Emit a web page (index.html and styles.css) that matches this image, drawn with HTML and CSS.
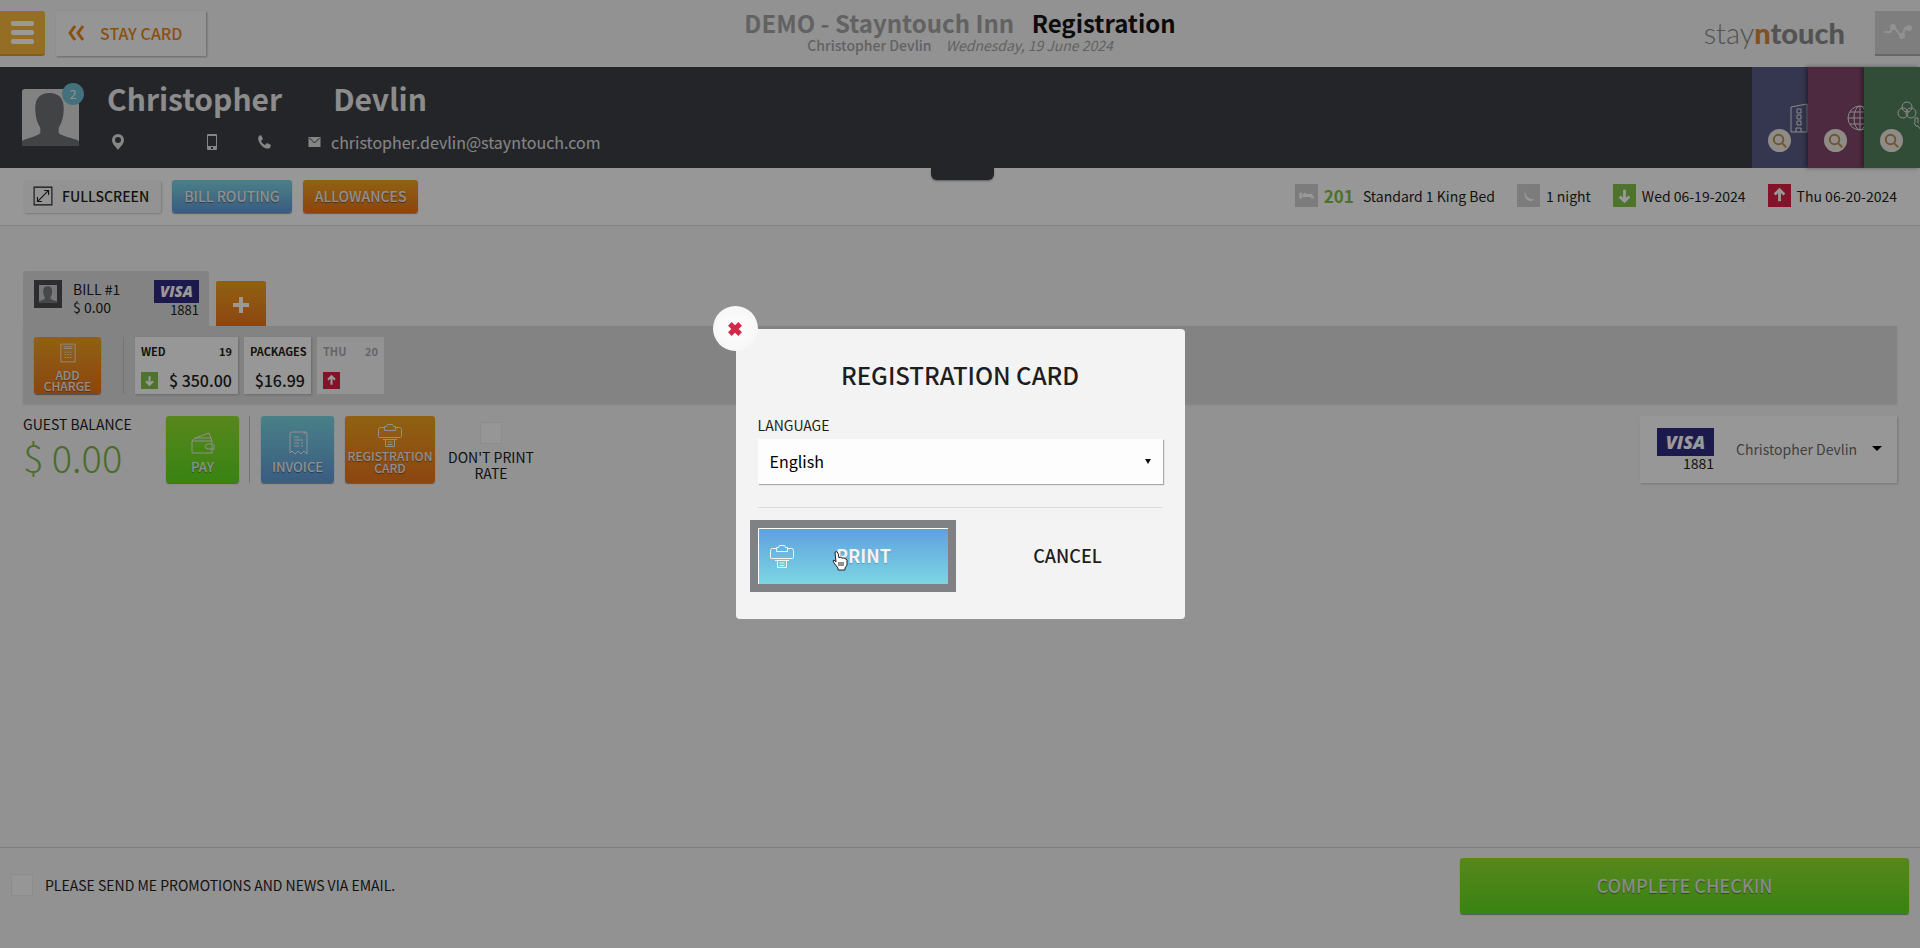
FILE: index.html
```html
<!DOCTYPE html>
<html lang="en">
<head>
    <meta charset="UTF-8">
    <meta name="viewport" content="width=device-width, initial-scale=1.0">
    <title>Registration</title>
    <link rel="stylesheet" href="styles.css">
</head>
<body>
    <!-- Shared icons -->
    <svg class="sprite" aria-hidden="true">
        <symbol id="printer" viewBox="0 0 24 24">
            <path d="M6.500 3.500H2.500a2 2 0 0 0-2 2v7a1 1 0 0 0 1 1h21a1 1 0 0 0 1-1v-7a2 2 0 0 0-2-2h-4M6.500 6.500v-4h2l1-2h5l1 2h2v4zM5 15.500h14M7.500 15.500v7h9v-7M9.500 18h5M9.500 20.500h5"/>
        </symbol>
        <symbol id="arrow" viewBox="0 0 24 24">
            <path d="M12 6v12M7 13l5 5 5-5"/>
        </symbol>
        <symbol id="search" viewBox="0 0 24 24">
            <circle cx="11" cy="11" r="5"/>
            <path d="M15 15l4 4"/>
        </symbol>
        <symbol id="person" viewBox="0 0 56 56">
            <path d="M27 4c9 0 14 5 14 15 0 8-2 15-5 19v5c3 4 15 5 20 8v5H0v-5c5-3 15-4 18-8v-5c-3-4-5-11-5-19C13 9 18 4 27 4z"/>
        </symbol>
    </svg>

    <header class="header">
        <button type="button" class="menu-btn" aria-label="Menu"><span></span><span></span><span></span></button>
        <button type="button" class="back-btn">
            <svg viewBox="0 0 18 18"><path d="M8 2L3 9l5 7M16 2l-5 7 5 7"/></svg>
            STAY CARD
        </button>
        <div class="heading">
            <h1><span>DEMO - Stayntouch Inn</span> Registration</h1>
            <p><strong>Christopher Devlin</strong> <em>Wednesday, 19 June 2024</em></p>
        </div>
        <div class="logo"><span class="thin">stay</span><span class="orange">n</span>touch</div>
        <button type="button" class="activity-btn" aria-label="Activity">
            <svg viewBox="0 0 32 24"><path d="M2 13h6l3-6 9 11 3-9 6 1"/><circle cx="11" cy="8" r="2"/><circle cx="20" cy="17" r="2"/><circle cx="27" cy="9" r="2"/></svg>
        </button>
    </header>

    <section class="guest">
        <div class="avatar">
            <svg><use href="#person"/></svg>
            <span class="badge">2</span>
        </div>
        <div class="guest-info">
            <h2><span>Christopher</span><span>Devlin</span></h2>
            <div class="contact">
                <svg class="pin" viewBox="0 0 14 18"><path fill-rule="evenodd" d="M7 1a6 6 0 0 1 6 6c0 4-4 7-6 10C5 14 1 11 1 7a6 6 0 0 1 6-6zm0 3a3 3 0 1 0 0 6 3 3 0 0 0 0-6z"/></svg>
                <svg class="mobile" viewBox="0 0 10 18"><path fill-rule="evenodd" d="M1 1h8q1 0 1 1v14q0 1-1 1H1q-1 0-1-1V2q0-1 1-1zm0 2v10h8V3zm3 11v2h2v-2z"/></svg>
                <svg class="phone" viewBox="0 0 14 14"><path d="M2 1l2-1 2 4-2 2c1 2 2 3 4 4l2-2 4 2-1 3c-2 1-5 1-8-2S0 3 2 1z"/></svg>
                <svg class="mail" viewBox="0 0 12 12"><path d="M0 1h12v10H0z"/><path class="fold" d="M1 2l5 5 5-5"/></svg>
                <span>christopher.devlin@stayntouch.com</span>
            </div>
        </div>
        <div class="side-cards">
            <a href="#" class="side-card blue" aria-label="Company">
                <svg class="picto" viewBox="0 0 30 30"><path d="M1 4l16-3v28H1zM7 6h4v4H7zM7 12h4v4H7zM7 18h4v4H7zM6 29v-4h5v4"/></svg>
                <span class="lens"><svg><use href="#search"/></svg></span>
            </a>
            <a href="#" class="side-card pink" aria-label="Travel agent">
                <svg class="picto" viewBox="0 0 30 30"><circle cx="14" cy="15" r="12"/><ellipse cx="14" cy="15" rx="6" ry="12"/><path d="M2 15h24M14 3v24M4 9h20M4 21h20"/></svg>
                <span class="lens"><svg><use href="#search"/></svg></span>
            </a>
            <a href="#" class="side-card green" aria-label="Group">
                <svg class="picto" viewBox="0 0 30 30"><circle cx="10" cy="6" r="5"/><circle cx="6" cy="12" r="5"/><circle cx="14" cy="12" r="5"/><path d="M18 22v-5h3v5M17 22l2 3h2l3 4"/></svg>
                <span class="lens"><svg><use href="#search"/></svg></span>
            </a>
        </div>
        <div class="handle"></div>
    </section>

    <section class="toolbar">
        <button type="button" class="btn plain">
            <svg viewBox="0 0 18 18"><path d="M1 1h16v16H1zM4 14L14 4M10 4h4v4M4 10v4h4"/></svg>
            FULLSCREEN
        </button>
        <button type="button" class="btn blue">BILL ROUTING</button>
        <button type="button" class="btn orange">ALLOWANCES</button>
        <ul class="stay">
            <li>
                <span class="tag"><svg viewBox="0 0 24 24"><path d="M6 9v6M8 12h10M9 10l3 2M18 12v3"/></svg></span>
                <b>201</b> Standard 1 King Bed
            </li>
            <li>
                <span class="tag"><svg viewBox="0 0 24 24"><path class="solid" d="M9 6c-1 6 2 10 9 10-5 5-13-2-9-10z"/></svg></span>
                1 night
            </li>
            <li><span class="tag in"><svg><use href="#arrow"/></svg></span> Wed 06-19-2024</li>
            <li><span class="tag out"><svg><use href="#arrow"/></svg></span> Thu 06-20-2024</li>
        </ul>
    </section>

    <main class="bills">
        <div class="tabs">
            <button type="button" class="tab">
                <span class="thumb"><svg><use href="#person"/></svg></span>
                <span class="tab-name">BILL #1<br>$ 0.00</span>
                <span class="card-no"><span class="visa">VISA</span>1881</span>
            </button>
            <button type="button" class="add-btn" aria-label="Add bill"><svg viewBox="0 0 16 16"><path d="M8 0v16M0 8h16"/></svg></button>
        </div>

        <div class="days">
            <button type="button" class="btn orange charge">
                <svg viewBox="0 0 18 22"><path d="M1 1h16v20H1zM4 4h10M4 6h10M5 10h2M8 10h2M11 10h2M5 13h2M8 13h2M11 13h2M5 16h2M8 16h2M11 16h2"/></svg>
                ADD<br>CHARGE
            </button>
            <span class="line"></span>
            <div class="day wide">
                <div><span>WED</span><span>19</span></div>
                <div class="amount"><span class="tag in small"><svg><use href="#arrow"/></svg></span><span>$ 350.00</span></div>
            </div>
            <div class="day">
                <div><span>PACKAGES</span></div>
                <div class="amount only"><span>$16.99</span></div>
            </div>
            <div class="day faded">
                <div><span>THU</span><span>20</span></div>
                <div class="amount"><span class="tag out small"><svg><use href="#arrow"/></svg></span></div>
            </div>
        </div>

        <div class="summary">
            <div class="balance">
                GUEST BALANCE
                <span>$ 0.00</span>
            </div>
            <button type="button" class="btn lime action">
                <svg viewBox="0 0 24 24"><path d="M2 10h19v12H2a1 1 0 0 1-1-1V10l3-3 14-5 3 8M4 7l16 0M21 13h-4a2 2 0 0 0 0 5h4M23 13v5h-2"/></svg>
                PAY
            </button>
            <span class="line"></span>
            <button type="button" class="btn blue action">
                <svg viewBox="0 0 24 24"><path d="M4 22V3q0-2 2-2h14q-2 0-2 2v0M18 5v0M20 1q1 0 1 2v20l-3-3-3 3-3-3-3 3-3-3-2 2M8 6h5M8 9h9M8 12h5M15 12h2M8 15h5M15 15h2"/></svg>
                INVOICE
            </button>
            <button type="button" class="btn orange action wide">
                <svg><use href="#printer"/></svg>
                REGISTRATION<br>CARD
            </button>
            <label class="no-rate">
                <input type="checkbox" class="check">
                DON'T PRINT<br>RATE
            </label>
            <button type="button" class="payer">
                <span class="card-no large"><span class="visa">VISA</span>1881</span>
                <span>Christopher Devlin</span>
                <span class="caret"></span>
            </button>
        </div>
    </main>

    <footer class="footer">
        <label class="promo">
            <input type="checkbox" class="check">
            PLEASE SEND ME PROMOTIONS AND NEWS VIA EMAIL.
        </label>
        <button type="button" class="btn lime complete">COMPLETE CHECKIN</button>
    </footer>

    <div class="overlay">
        <form class="modal" role="dialog" aria-labelledby="modalTitle">
            <button type="button" class="close" aria-label="Close"><svg viewBox="0 0 14 14"><path d="M3 3l8 8M11 3l-8 8"/></svg></button>
            <h3 id="modalTitle">REGISTRATION CARD</h3>
            <label for="language">LANGUAGE</label>
            <div class="select-box">
                <select id="language" name="language">
                    <option>English</option>
                </select>
            </div>
            <hr>
            <div class="modal-actions">
                <button type="button" class="print">
                    <svg class="print-icon"><use href="#printer"/></svg>
                    PRINT
                    <svg class="pointer" viewBox="0 0 16 20"><path d="M3 1q2-1 3 1l1 5 1-1 2 1 2 0 2 1 1 1v5l-2 3v2H6v-2l-4-5q-2-3 0-3l2 2z"/><path d="M7 11v4M9 11v4M11 11v4"/></svg>
                </button>
                <button type="button" class="cancel">CANCEL</button>
            </div>
        </form>
    </div>
</body>
</html>
```

FILE: styles.css
```css
* {
    box-sizing: border-box;
}

body {
    margin: 0;
    min-height: 100vh;
    display: flex;
    flex-direction: column;
    font-family: 'Noto Sans CJK JP', 'Noto Sans', sans-serif;
    font-size: 14px;
    line-height: 18px;
    color: #1e1e20;
    background: #f3f3f3;
}

button, select {
    font: inherit;
    color: inherit;
    border: none;
    padding: 0;
    cursor: pointer;
}

svg {
    fill: none;
    stroke: currentColor;
    flex: none;
}

.sprite {
    position: absolute;
    width: 0;
    height: 0;
}

/* Header */
.header {
    position: relative;
    display: flex;
    align-items: center;
    height: 67px;
}

.menu-btn {
    display: flex;
    flex-direction: column;
    align-items: flex-end;
    justify-content: center;
    gap: 4px;
    width: 45px;
    height: 45px;
    padding-right: 11px;
    background: #f9b83e;
    border-bottom: 2px solid #d79b2e;
    border-radius: 0 3px 3px 0;
}

.menu-btn span {
    width: 23px;
    height: 5px;
    border-radius: 2px;
    background: #fff;
}

.back-btn {
    display: flex;
    align-items: center;
    gap: 14px;
    height: 45px;
    margin-left: 11px;
    padding: 0 23px 2px 10px;
    font-size: 16px;
    font-weight: 500;
    color: #e8851c;
    background: #f9f9f9;
    box-shadow: 1px 1px 2px rgba(0, 0, 0, 0.3);
}

.back-btn svg {
    width: 20px;
    height: 18px;
    stroke-width: 3;
}

.heading {
    position: absolute;
    left: 50%;
    top: 9px;
    transform: translateX(-50%);
    text-align: center;
    white-space: nowrap;
}

.heading h1 {
    margin: 0;
    font-size: 24px;
    line-height: 28px;
    color: #141416;
}

.heading h1 span {
    margin-right: 12px;
    color: #a3a3a3;
}

.heading p {
    margin: 0;
    font-size: 14px;
    line-height: 16px;
    color: #a3a3a3;
}

.heading strong {
    font-weight: 500;
    margin-right: 11px;
}

.heading em {
    font-weight: 400;
}

.logo {
    margin-left: auto;
    padding-bottom: 2px;
    font-family: Lato, sans-serif;
    font-size: 29px;
    font-weight: 900;
    line-height: 34px;
    color: #8a8a8a;
}

.logo .thin {
    font-weight: 300;
}

.logo .orange {
    color: #dc8434;
}

.activity-btn {
    width: 45px;
    height: 45px;
    margin-left: 30px;
    color: #f3f3f3;
    background: #d2d2d2;
    border-bottom: 2px solid #aaa;
}

.activity-btn svg {
    width: 32px;
    height: 24px;
    stroke-width: 2;
}

.activity-btn circle {
    fill: currentColor;
}

/* Guest */
.guest {
    position: relative;
    display: flex;
    height: 101px;
    padding-left: 22px;
    color: #f3f3f3;
    background: #3c3e44;
}

.avatar {
    position: relative;
    width: 57px;
    height: 57px;
    margin-top: 22px;
    background: #d9d9d9;
    border-radius: 3px;
}

.avatar svg {
    width: 57px;
    height: 57px;
    fill: #6f7073;
    stroke: none;
}

.badge {
    position: absolute;
    right: -5px;
    top: -6px;
    width: 22px;
    height: 22px;
    border-radius: 50%;
    font-size: 12px;
    line-height: 22px;
    text-align: center;
    background: #6fbdd0;
}

.guest-info {
    margin: 13px 0 0 28px;
}

.guest-info h2 {
    display: flex;
    gap: 51px;
    margin: 0;
    font-size: 30px;
    line-height: 36px;
    color: #e9e9ea;
}

.contact {
    display: flex;
    align-items: center;
    height: 24px;
    margin-top: 14px;
    padding-left: 4px;
    font-size: 16px;
    color: #e0e0e0;
}

.contact svg {
    fill: currentColor;
    stroke: none;
}

.pin {
    width: 14px;
    height: 18px;
    margin-right: 82px;
}

.mobile {
    width: 10px;
    height: 18px;
    margin-right: 40px;
}

.phone {
    width: 14px;
    height: 14px;
    margin-right: 37px;
}

.mail {
    width: 13px;
    height: 12px;
    margin-right: 10px;
}

.contact .fold {
    fill: none;
    stroke: #3c3e44;
}

.side-cards {
    display: flex;
    margin-left: auto;
}

.side-card {
    position: relative;
    width: 56px;
    overflow: hidden;
    color: #e6e6e6;
}

.side-card + .side-card {
    box-shadow: -2px 0 4px rgba(0, 0, 0, 0.4);
}

.side-card.blue {
    background: #595a84;
}

.side-card.pink {
    background: #80476a;
}

.side-card.green {
    background: #53805c;
}

.picto {
    position: absolute;
    left: 38px;
    top: 36px;
    width: 30px;
    height: 30px;
    stroke-width: 1;
}

.side-card.green .picto {
    left: 33px;
    top: 34px;
}

.lens {
    position: absolute;
    left: 16px;
    top: 62px;
    width: 23px;
    height: 23px;
    border-radius: 50%;
    color: #b98f52;
    background: #efe9e2;
}

.lens svg {
    width: 23px;
    height: 23px;
    stroke-width: 2;
}

.handle {
    position: absolute;
    left: 50%;
    top: 100%;
    width: 63px;
    height: 12px;
    margin-left: -29px;
    background: #3c3e44;
    border-radius: 0 0 6px 6px;
    box-shadow: 0 1px 2px rgba(0, 0, 0, 0.4);
}

/* Buttons */
.btn {
    height: 33px;
    padding: 0 12px 2px;
    font-size: 14px;
    font-weight: 500;
    color: #f0f0f0;
    border-radius: 3px;
    text-shadow: 0 1px 1px rgba(0, 0, 0, 0.4);
    box-shadow: 0 1px 1px rgba(0, 0, 0, 0.4);
}

.btn.blue {
    background: linear-gradient(#7bd6e2, #6199d8);
}

.btn.orange {
    background: linear-gradient(#f0a21e, #ea741c);
}

.btn.lime {
    background: linear-gradient(#92e030, #5edc1e);
}

.btn.plain {
    display: flex;
    align-items: center;
    gap: 9px;
    padding: 0 12px 2px 10px;
    color: #1e1e20;
    background: #f6f6f6;
    text-shadow: none;
    box-shadow: 1px 1px 2px rgba(0, 0, 0, 0.2);
}

.btn.plain svg {
    width: 20px;
    height: 20px;
}

/* Toolbar */
.toolbar {
    display: flex;
    align-items: center;
    gap: 11px;
    height: 58px;
    padding: 0 23px;
    background: #fcfcfc;
    border-bottom: 1px solid #dcdcdc;
}

.stay {
    display: flex;
    gap: 22px;
    margin: 0 0 0 auto;
    padding: 0 0 2px;
    list-style: none;
}

.stay li {
    display: flex;
    align-items: center;
    gap: 6px;
}

.stay b {
    margin-right: 3px;
    font-size: 17px;
    color: #80bf45;
}

.tag {
    width: 23px;
    height: 23px;
    color: #fff;
    background: #cfcfcf;
}

.tag svg {
    display: block;
    width: 100%;
    height: 100%;
    stroke-width: 3;
}

.tag .solid {
    fill: currentColor;
    stroke: none;
}

.tag.in {
    background: #80c04a;
}

.tag.out {
    background: #dc1f45;
}

.tag.out svg {
    transform: rotate(180deg);
}

.tag.small {
    width: 17px;
    height: 17px;
}

/* Bills */
.bills {
    flex: 1;
    padding: 45px 23px 0;
}

.tabs {
    display: flex;
    align-items: flex-end;
    gap: 7px;
}

.tab {
    display: flex;
    width: 186px;
    height: 55px;
    padding: 9px 10px 0 11px;
    text-align: left;
    background: #dadada;
    border-radius: 3px 3px 0 0;
}

.thumb {
    width: 28px;
    height: 28px;
    padding: 5px;
    background: #4b4c50;
}

.thumb svg {
    display: block;
    width: 18px;
    height: 18px;
    fill: #77787a;
    stroke: none;
    background: #c9c9c9;
}

.tab-name {
    margin-left: 11px;
}

.card-no {
    display: flex;
    flex-direction: column;
    align-items: flex-end;
    margin-left: auto;
    font-size: 13px;
    line-height: 14px;
}

.visa {
    width: 45px;
    height: 23px;
    font-family: 'Open Sans', sans-serif;
    font-size: 15px;
    font-weight: 800;
    font-style: italic;
    line-height: 23px;
    text-align: center;
    color: #fff;
    background: #2f2a80;
}

.add-btn {
    width: 50px;
    height: 45px;
    padding-top: 6px;
    color: #fff;
    background: linear-gradient(#f0a21e, #ea741c);
    border-radius: 2px 2px 0 0;
}

.add-btn svg {
    width: 16px;
    height: 16px;
    stroke-width: 4;
}

.days {
    display: flex;
    gap: 6px;
    height: 78px;
    padding: 11px 11px 10px;
    background: #dadada;
    box-shadow: 0 1px 2px rgba(0, 0, 0, 0.1);
}

.btn.charge {
    display: flex;
    flex-direction: column;
    align-items: center;
    width: 67px;
    height: 57px;
    padding: 5px 0 0;
    font-size: 12px;
    line-height: 11px;
}

.charge svg {
    width: 16px;
    height: 22px;
    margin-bottom: 5px;
}

.line {
    width: 1px;
    background: #c4c4c4;
}

.days .line {
    margin: 0 5px 0 16px;
}

.day {
    display: flex;
    flex-direction: column;
    justify-content: space-between;
    width: 67px;
    padding: 5px 6px;
    font-size: 11px;
    font-weight: 700;
    background: #fcfcfc;
    box-shadow: 1px 1px 2px rgba(0, 0, 0, 0.2);
}

.day.wide {
    width: 103px;
}

.day div {
    display: flex;
    align-items: center;
    justify-content: space-between;
}

.day .amount {
    font-size: 16px;
    font-weight: 500;
}

.day .amount.only {
    justify-content: flex-end;
}

.day.faded {
    color: #a9a9a9;
    background: #f6f6f6;
    box-shadow: none;
}

/* Balance and actions */
.summary {
    display: flex;
    gap: 11px;
    height: 79px;
    padding-top: 12px;
}

.summary .line {
    margin-left: -1px;
}

.balance {
    width: 132px;
    line-height: 16px;
}

.balance span {
    display: block;
    margin-top: 3px;
    font-size: 38px;
    font-weight: 300;
    line-height: 44px;
    color: #7db44a;
}

.btn.action {
    display: flex;
    flex-direction: column;
    align-items: center;
    width: 73px;
    height: 67px;
    padding: 15px 0 0;
    font-size: 13px;
    line-height: 20px;
}

.action svg {
    width: 24px;
    height: 24px;
    margin-bottom: 2px;
}

.btn.action.wide {
    width: 90px;
    padding-top: 8px;
    font-size: 12px;
    line-height: 12px;
}

.no-rate {
    display: flex;
    flex-direction: column;
    align-items: center;
    padding: 6px 2px 0;
    line-height: 16px;
    text-align: center;
}

.check {
    appearance: none;
    width: 22px;
    height: 22px;
    margin: 0;
    border: 1px solid #eaeaea;
    background: #fafafa;
}

.no-rate .check {
    margin-bottom: 5px;
}

.payer {
    display: flex;
    align-items: center;
    width: 257px;
    margin-left: auto;
    padding: 0 15px 2px 17px;
    color: #6d6d6d;
    background: #fcfcfc;
    box-shadow: 1px 1px 2px rgba(0, 0, 0, 0.2);
}

.card-no.large {
    margin: 0 22px 0 0;
    font-size: 14px;
    line-height: 14px;
    color: #1e1e20;
}

.large .visa {
    width: 57px;
    height: 28px;
    font-size: 18px;
    line-height: 28px;
}

.caret {
    margin-left: auto;
    border: 5px solid transparent;
    border-top-color: #000;
    border-bottom: none;
}

/* Footer */
.footer {
    display: flex;
    justify-content: space-between;
    height: 101px;
    padding: 10px 11px;
    border-top: 1px solid #d2d2d2;
}

.promo {
    display: flex;
    align-items: center;
    gap: 12px;
    height: 54px;
}

.btn.complete {
    width: 449px;
    height: 56px;
    font-size: 18px;
    color: #e6e6e6;
}

/* Modal */
.overlay {
    position: fixed;
    inset: 0;
    display: flex;
    align-items: center;
    justify-content: center;
    background: rgba(0, 0, 0, 0.4);
}

.modal {
    position: relative;
    width: 449px;
    padding: 30px 22px 27px;
    background: #f3f3f3;
    border-radius: 4px;
}

.close {
    position: absolute;
    left: -23px;
    top: -23px;
    width: 45px;
    height: 45px;
    border-radius: 50%;
    color: #d02a48;
    background: radial-gradient(#fff, #f3f3f3);
}

.close svg {
    display: block;
    width: 18px;
    height: 18px;
    margin: auto;
    stroke-width: 4;
}

.modal h3 {
    margin: 0 0 25px;
    font-size: 24px;
    font-weight: 500;
    line-height: 32px;
    text-align: center;
}

.modal label {
    display: block;
    margin-bottom: 5px;
}

.select-box {
    position: relative;
}

.select-box::after {
    content: '';
    position: absolute;
    right: 12px;
    top: 20px;
    border: 3px solid transparent;
    border-top: 5px solid #111;
    border-bottom: none;
}

.select-box select {
    display: block;
    appearance: none;
    width: 100%;
    height: 45px;
    padding: 0 12px 2px;
    font-size: 16px;
    line-height: 26px;
    color: #000;
    background: #fdfdfd;
    box-shadow: 1px 1px 1px rgba(0, 0, 0, 0.3);
}

.modal hr {
    margin: 23px 0 12px;
    border: none;
    border-top: 1px solid #dadada;
}

.modal-actions {
    display: flex;
    justify-content: space-between;
    margin: 0 0 0 -8px;
    font-size: 18px;
    font-weight: 500;
}

.print {
    position: relative;
    width: 206px;
    height: 72px;
    padding: 0 0 2px 22px;
    font-weight: 700;
    color: #f3f3f3;
    background: linear-gradient(#5f9fe0, #7bd6e2) padding-box;
    border: 8px solid #808184;
    box-shadow: inset 1px 1px 0 #fff;
    text-shadow: 0 1px 1px rgba(0, 0, 0, 0.2);
}

.print-icon {
    position: absolute;
    left: 12px;
    top: 17px;
    width: 24px;
    height: 24px;
}

.pointer {
    position: absolute;
    left: 74px;
    top: 23px;
    width: 16px;
    height: 20px;
    color: #222;
    fill: #fff;
}

.cancel {
    width: 190px;
    height: 72px;
    padding-bottom: 2px;
    background: none;
}
```
